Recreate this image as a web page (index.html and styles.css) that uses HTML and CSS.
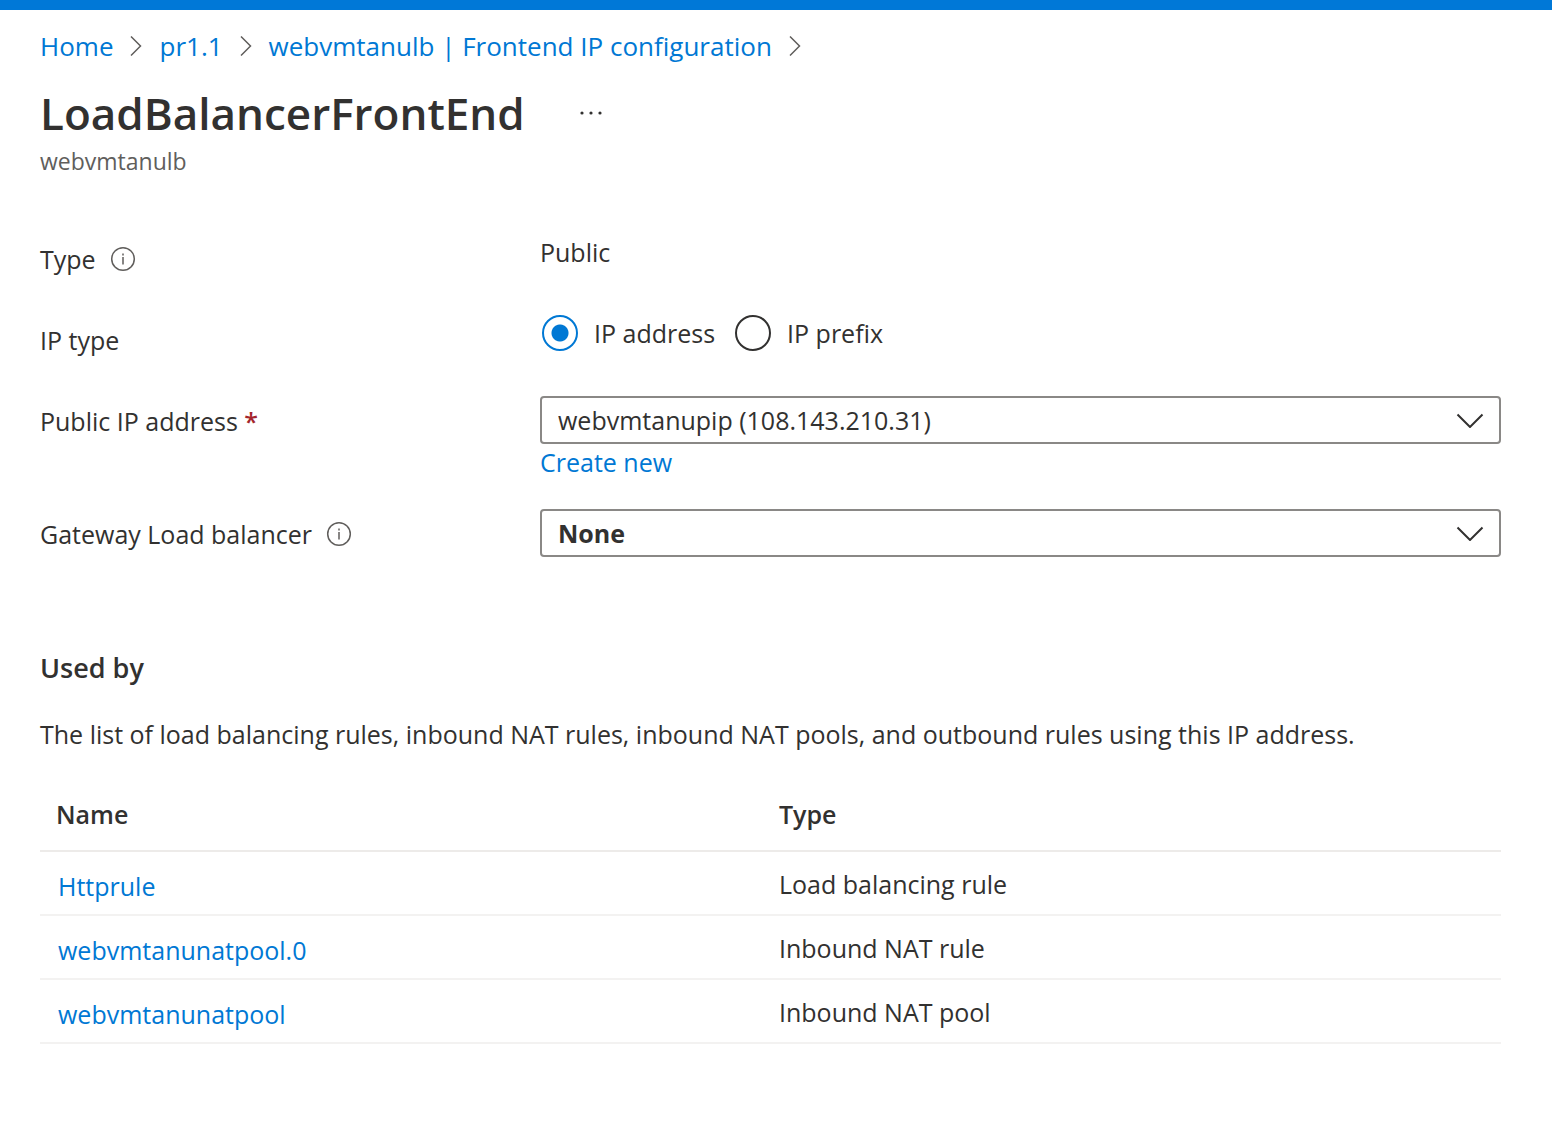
FILE: index.html
```
<!DOCTYPE html>
<html lang="en">
<head>
<meta charset="utf-8">
<meta name="viewport" content="width=device-width, initial-scale=1">
<title>LoadBalancerFrontEnd</title>
<link rel="stylesheet" href="styles.css">
</head>
<body>
<div class="topbar"></div>
<div class="page">
  <nav class="breadcrumb" aria-label="Breadcrumb">
    <a href="#">Home</a>
    <svg class="crumb-arrow" viewBox="0 0 12 20" aria-hidden="true"><path d="M1 0.5L10.500 10L1 19.500"/></svg>
    <a href="#">pr1.1</a>
    <svg class="crumb-arrow" viewBox="0 0 12 20" aria-hidden="true"><path d="M1 0.5L10.500 10L1 19.500"/></svg>
    <a href="#">webvmtanulb | Frontend IP configuration</a>
    <svg class="crumb-arrow" viewBox="0 0 12 20" aria-hidden="true"><path d="M1 0.5L10.500 10L1 19.500"/></svg>
  </nav>

  <header class="heading">
    <div class="title-row">
      <h1 class="title">LoadBalancerFrontEnd</h1>
      <button class="more" type="button" aria-label="More actions">
        <svg viewBox="0 0 24 4" aria-hidden="true"><circle cx="3" cy="2" r="1.600"/><circle cx="12" cy="2" r="1.600"/><circle cx="21" cy="2" r="1.600"/></svg>
      </button>
    </div>
    <p class="subtitle">webvmtanulb</p>
  </header>

  <main>
    <form class="form">
      <div class="row">
        <div class="label">Type
          <svg class="info" viewBox="0 0 26 26" aria-hidden="true"><circle cx="13" cy="13" r="11.300"/><path d="M13 11v7.500M13 7.500v2"/></svg>
        </div>
        <div class="value">Public</div>
      </div>
      <div class="row" role="radiogroup" aria-labelledby="ip-type">
        <div class="label" id="ip-type">IP type</div>
        <div class="radios">
          <label class="option"><input class="radio" type="radio" name="ip-type" checked>IP address</label>
          <label class="option"><input class="radio" type="radio" name="ip-type">IP prefix</label>
        </div>
      </div>
      <div class="row">
        <label class="label" for="public-ip"><span>Public IP address <span class="required">*</span></span></label>
        <div class="field">
          <div class="dropdown">
            <select class="select" id="public-ip"><option>webvmtanupip (108.143.210.31)</option></select>
            <svg class="chevron" viewBox="0 0 28 16" aria-hidden="true"><path d="M1.500 2.500L14 15L26.500 2.500"/></svg>
          </div>
          <a href="#">Create new</a>
        </div>
      </div>
      <div class="row">
        <label class="label" for="gateway">Gateway Load balancer
          <svg class="info" viewBox="0 0 26 26" aria-hidden="true"><circle cx="13" cy="13" r="11.300"/><path d="M13 11v7.500M13 7.500v2"/></svg>
        </label>
        <div class="dropdown">
          <select class="select strong" id="gateway"><option>None</option></select>
          <svg class="chevron" viewBox="0 0 28 16" aria-hidden="true"><path d="M1.500 2.500L14 15L26.500 2.500"/></svg>
        </div>
      </div>
    </form>

    <section class="used-by">
      <h2 class="section-title">Used by</h2>
      <p class="description">The list of load balancing rules, inbound NAT rules, inbound NAT pools, and outbound rules using this IP address.</p>
      <table class="rules">
        <thead><tr><th scope="col">Name</th><th scope="col">Type</th></tr></thead>
        <tbody>
          <tr><td><a href="#">Httprule</a></td><td>Load balancing rule</td></tr>
          <tr><td><a href="#">webvmtanunatpool.0</a></td><td>Inbound NAT rule</td></tr>
          <tr><td><a href="#">webvmtanunatpool</a></td><td>Inbound NAT pool</td></tr>
        </tbody>
      </table>
    </section>
  </main>
</div>
</body>
</html>
```
FILE: styles.css
```
* { box-sizing: border-box; }

body {
  margin: 0;
  background: #fff;
  color: #323130;
  font: 400 25px/36px "Segoe UI", "Open Sans", "Noto Sans", sans-serif;
}

h1, h2, p { margin: 0; }
a { color: #0078d4; text-decoration: none; }
a:hover { text-decoration: underline; }

.topbar { height: 10px; background: #0078d7; }
.page { padding: 18px 51px 40px 40px; }

.breadcrumb {
  display: flex;
  align-items: center;
  gap: 17px;
  font-size: 26px;
}
.crumb-arrow {
  width: 12px;
  height: 20px;
  fill: none;
  stroke: #605e5c;
  stroke-width: 1.500;
}

.title-row { display: flex; align-items: center; gap: 54px; margin-top: 17px; }
.title { font-size: 44px; line-height: 64px; font-weight: 600; }
.more {
  display: flex;
  padding: 10px 0;
  border: 0;
  background: none;
}
.more svg { width: 24px; height: 4px; fill: #323130; }
.subtitle { font-size: 23px; line-height: 32px; color: #605e5c; }

.form { display: grid; gap: 29px; margin-top: 57px; }
.row {
  display: grid;
  grid-template-columns: 500px minmax(0, 1fr);
  align-items: start;
  min-height: 52px;
}
.label { display: flex; align-items: center; gap: 14px; padding-top: 7px; }
.required { color: #a4262c; font-weight: 600; }
.info { width: 26px; height: 26px; fill: none; stroke: #605e5c; stroke-width: 1.500; }

.radios { display: flex; gap: 20px; padding-left: 2px; }
.option { display: flex; align-items: center; gap: 16px; }
.radio {
  appearance: none;
  width: 36px;
  height: 36px;
  margin: 0;
  border: 2px solid #323130;
  border-radius: 50%;
}
.radio:checked {
  border-color: #0078d4;
  background: radial-gradient(circle, #0078d4 8px, transparent 9px);
}

.dropdown { display: grid; align-items: center; }
.select {
  grid-area: 1 / 1;
  appearance: none;
  width: 100%;
  height: 48px;
  padding: 0 60px 0 16px;
  border: 2px solid #8a8886;
  border-radius: 4px;
  background: #fff;
  color: inherit;
  font: inherit;
}
.strong { font-weight: 700; }
.chevron {
  grid-area: 1 / 1;
  justify-self: end;
  width: 28px;
  height: 16px;
  margin-right: 17px;
  fill: none;
  stroke: #323130;
  stroke-width: 2;
  pointer-events: none;
}

.used-by { margin-top: 89px; }
.section-title { font-size: 27px; line-height: 36px; font-weight: 600; }
.description { margin-top: 30px; }

.rules {
  width: 100%;
  margin-top: 26px;
  border-collapse: separate;
  border-spacing: 0;
  table-layout: fixed;
}
.rules th, .rules td {
  height: 64px;
  padding: 0 16px;
  border-bottom: 2px solid #f3f2f1;
  text-align: left;
}
.rules td { padding-top: 2px; }
.rules td a { display: inline-block; padding: 4px 2px 0; }
.rules th:first-child { width: 723px; }
.rules th { height: 74px; border-color: #edebe9; font-weight: 600; }
```
